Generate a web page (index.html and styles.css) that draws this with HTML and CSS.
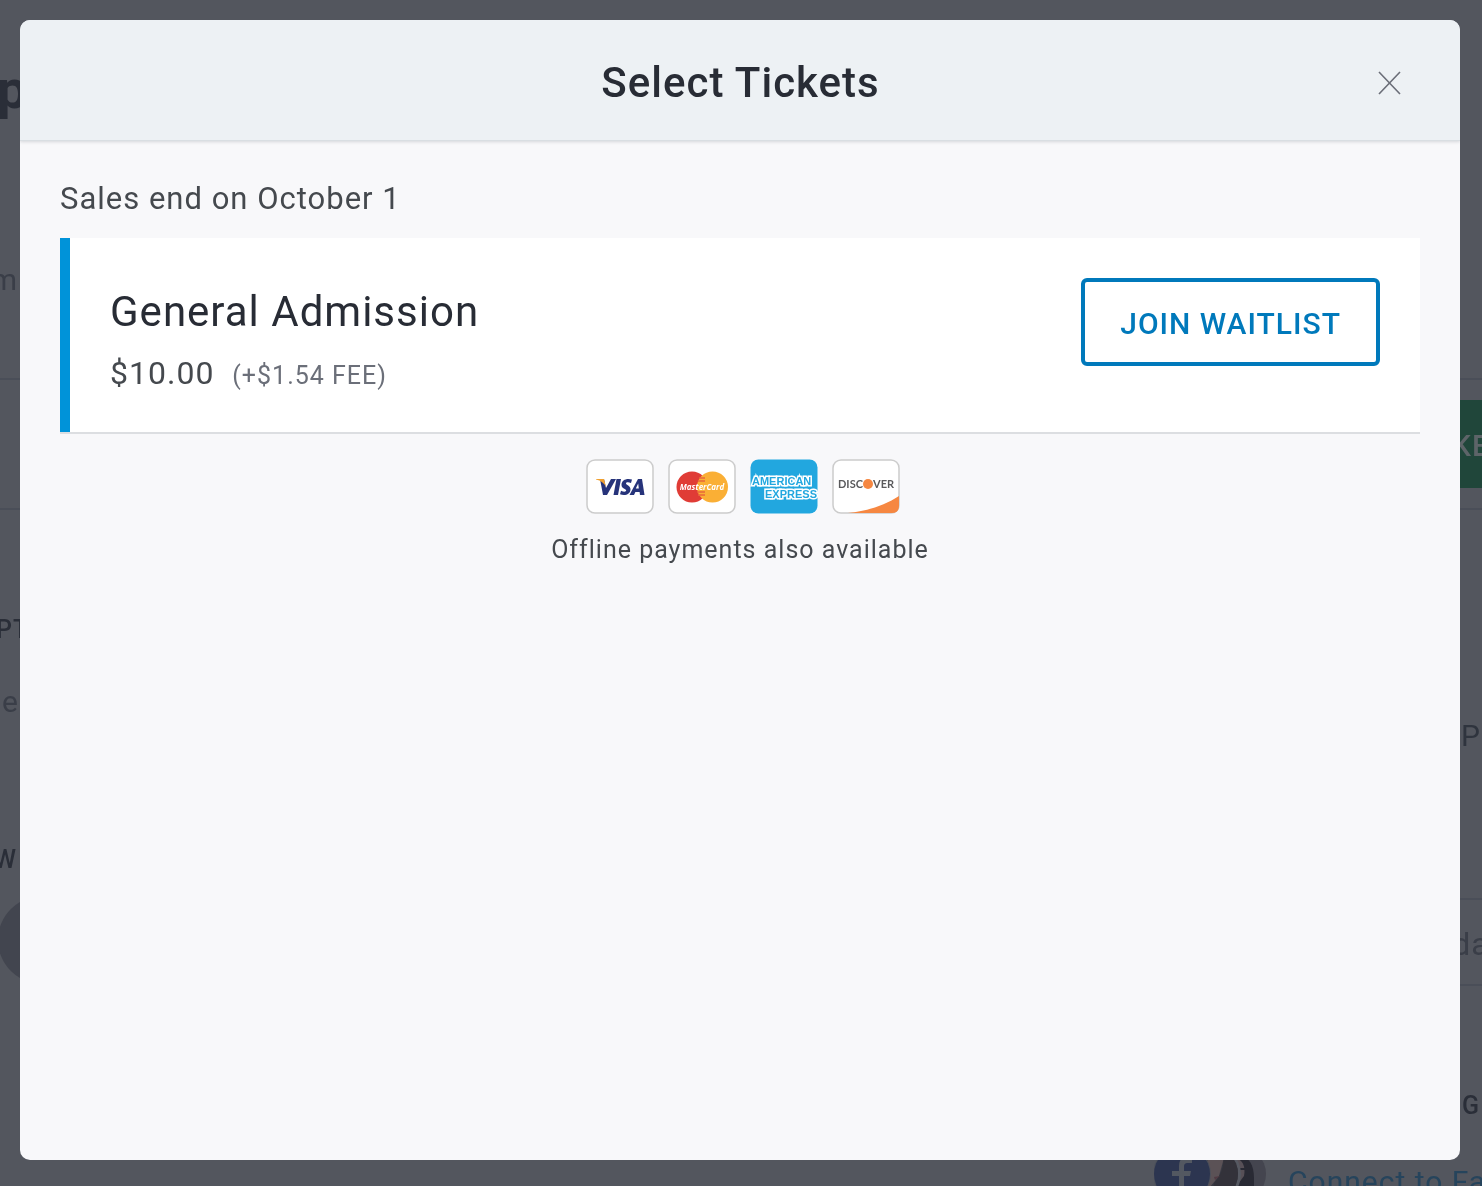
FILE: index.html
```html
<!DOCTYPE html>
<html lang="en">
<head>
<meta charset="utf-8">
<meta name="viewport" content="width=device-width, initial-scale=1">
<title>Select Tickets</title>
<link rel="stylesheet" href="styles.css">
</head>
<body>
<div class="page" aria-hidden="true">
  <div class="page-columns">
    <div class="strip">
      <div class="strip-title">p</div>
      <div class="strip-meta">m</div>
      <div class="strip-band"></div>
      <div class="strip-body">
        <div class="strip-label strip-label-start">PT</div>
        <div class="strip-text strip-copy">e</div>
        <div class="strip-label strip-tags">W</div>
        <div class="strip-avatar"></div>
      </div>
    </div>
    <div class="strip strip-right">
      <div class="strip-top"></div>
      <div class="strip-band"><div class="strip-buy">KE</div></div>
      <div class="strip-place">P</div>
      <div class="strip-date">da</div>
      <div class="strip-label strip-friends">G</div>
    </div>
  </div>
  <div class="connect">
    <svg class="faces" viewBox="0 0 114 56">
      <defs>
        <clipPath id="face-one"><circle cx="56" cy="28" r="28"/></clipPath>
        <clipPath id="face-two"><circle cx="84" cy="28" r="28"/></clipPath>
      </defs>
      <g clip-path="url(#face-two)">
        <rect x="56" width="58" height="56" fill="#44454f"/>
        <path d="M80 14c10-8 20 0 20 18v24H78z" fill="#292a34"/>
        <path d="M82 13c6 0 10 7 8 17l-6 8h-4z" fill="#575057"/>
        <path d="M84 23h8" stroke="#292a34" stroke-width="2"/>
      </g>
      <circle cx="58" cy="28" r="29" fill="#565962"/>
      <g clip-path="url(#face-one)">
        <rect x="28" width="56" height="56" fill="#383a43"/>
        <path d="M54 8l16 4-5 18-9 11-4-2z" fill="#5b5256"/>
        <path d="M69 6c2 14-2 23-9 31l-2 19h26V8z" fill="#33323a"/>
        <path d="M60 31l6-1-5 4z" fill="#503a43"/>
      </g>
      <circle cx="28" cy="28" r="29" fill="#4c505b"/>
      <circle cx="28" cy="28" r="28" fill="#2c3550"/>
      <path d="M25 44V30h-7v-5h7v-5c0-6 3-9 9-9l4 1v5h-4c-3 0-4 1-4 4v4h7l-1 5h-6v14z" fill="#535861"/>
    </svg>
    <span class="connect-text">Connect to Facebook</span>
  </div>
</div>

<main class="modal" role="dialog" aria-modal="true" aria-labelledby="modal-title">
  <header class="modal-header">
    <h1 class="modal-title" id="modal-title">Select Tickets</h1>
    <button class="close" type="button" aria-label="Close">
      <svg class="close-icon" viewBox="0 0 24 24"><path d="M2 1l21 22M23 1L2 23" stroke="#6b6e78" stroke-width="1.600" fill="none"/></svg>
    </button>
  </header>
  <div class="modal-body">
    <p class="sales-end">Sales end on October 1</p>
    <section class="ticket">
      <div class="ticket-info">
        <h2 class="ticket-name">General Admission</h2>
        <p class="ticket-price">$10.00 <span class="ticket-fee">(+$1.54 FEE)</span></p>
      </div>
      <button class="waitlist" type="button">JOIN WAITLIST</button>
    </section>
    <div class="payments">
      <div class="cards">
        <svg class="card" viewBox="0 0 68 55" role="img" aria-label="Visa">
          <rect x="1" y="1" width="66" height="53" rx="8" fill="#fff" stroke="#ccc" stroke-width="1.5"/>
          <g fill="#26337a">
            <path d="M14 20h4l2 9 5-9h5l-9 16h-4z"/>
            <path d="M30.500 20h4.500l-3 16h-4.500z"/>
            <path d="M46 20.500l-1 3.500c-3-1.200-5-.8-5 .6 0 1.600 4.500 2 4.500 5.700 0 5-5.500 7-10.500 5l1-3.600c3 1.400 5 1.200 5.200-.2.200-1.600-4.700-2-4.700-5.600 0-5 5.200-7 10.500-5.400z"/>
            <path fill-rule="evenodd" d="M52 20h4l2.500 16H54l-.4-3h-4.200L48 36h-4.500zm.8 9.500l-.6-5-2.400 5z"/>
          </g>
          <path d="M10 20h8l2 8c-2-4-5-6.500-10-7.500z" fill="#f0a030"/>
        </svg>
        <svg class="card" viewBox="0 0 68 55" role="img" aria-label="MasterCard">
          <rect x="1" y="1" width="66" height="53" rx="8" fill="#fff" stroke="#ccc" stroke-width="1.5"/>
          <circle cx="24" cy="28" r="15.500" fill="#e03c36"/>
          <circle cx="44.500" cy="28" r="15.500" fill="#faaf35"/>
          <path d="M31 19h6M30 22h7M29 33h8M30 36h7" stroke="#e8683a" stroke-width="1.500"/>
          <text class="mastercard-text" x="34" y="31" text-anchor="middle">MasterCard</text>
        </svg>
        <svg class="card" viewBox="0 0 68 55" role="img" aria-label="American Express">
          <rect x=".5" y=".5" width="67" height="54" rx="8" fill="#22a7df"/>
          <text class="amex-text" x="2" y="26">AMERICAN</text>
          <text class="amex-text" x="15" y="39">EXPRESS</text>
        </svg>
        <svg class="card" viewBox="0 0 68 55" role="img" aria-label="Discover">
          <rect x="1" y="1" width="66" height="53" rx="8" fill="#fff" stroke="#ccc" stroke-width="1.5"/>
          <path d="M16 54c20-2 37-8 51-17v10q0 7-7 7z" fill="#f68741"/>
          <text class="discover-text" x="6" y="29">DISC</text>
          <circle cx="36" cy="25" r="5" fill="#f68741"/>
          <text class="discover-text" x="41" y="29">VER</text>
        </svg>
      </div>
      <p class="offline">Offline payments also available</p>
    </div>
  </div>
</main>
</body>
</html>
```
FILE: styles.css
```css
* { box-sizing: border-box; }

html, body { height: 100%; }

body {
  margin: 0;
  background: #53565e;
  color: #45494e;
  font-family: Roboto, "Liberation Sans", sans-serif;
  letter-spacing: 1px;
}

h1, h2, p { margin: 0; font-weight: 400; }

button { font: inherit; letter-spacing: inherit; cursor: pointer; }

/* Dimmed event page behind the dialog */
.page {
  position: fixed;
  inset: 0;
  overflow: hidden;
  color: #3a3e48;
  font-size: 30px;
}

.page-columns { display: flex; justify-content: space-between; height: 1146px; }

.strip { width: 20px; overflow: hidden; }
.strip-right { width: 22px; }

.strip-title {
  height: 180px;
  line-height: 180px;
  font-size: 54px;
  font-weight: 700;
  color: #2a2e38;
  text-indent: -3px;
}

.strip-meta {
  display: flex;
  justify-content: flex-end;
  height: 200px;
  line-height: 200px;
  padding-right: 2px;
  border-bottom: 2px solid #4a4e58;
}

.strip-top { height: 380px; border-bottom: 2px solid #4a4e58; }

.strip-band { height: 130px; padding: 20px 0; border-bottom: 2px solid #4a4e58; }

.strip-buy {
  display: flex;
  justify-content: center;
  height: 88px;
  line-height: 92px;
  background: #20463a;
  color: #5d6468;
  font-size: 30px;
  font-weight: 500;
}

.strip-body { padding-top: 104px; }

.strip-label { line-height: 32px; font-size: 25px; font-weight: 500; color: #2a2e38; }
.strip-label-start { text-indent: -4px; }

.strip-text { line-height: 32px; }
.strip-copy { margin-top: 40px; padding-left: 2px; }

.strip-tags { display: flex; justify-content: flex-end; margin-top: 126px; padding-right: 3px; }

.strip-avatar {
  width: 88px;
  height: 88px;
  margin: 20px 0 0 -2px;
  border-radius: 50%;
  background: #42454f;
}

.strip-place, .strip-date, .strip-friends { display: flex; justify-content: center; }
.strip-place { height: 390px; padding-top: 208px; line-height: 36px; border-bottom: 2px solid #4a4e58; color: #2f343e; }
.strip-date { height: 86px; line-height: 88px; font-size: 32px; border-bottom: 2px solid #4a4e58; }
.strip-friends { padding-top: 104px; }

.connect { display: flex; gap: 20px; width: 328px; margin-left: auto; white-space: nowrap; color: #26445c; }
.faces { flex: none; width: 114px; height: 56px; }
.connect-text { padding-top: 18px; line-height: 36px; }

/* Dialog */
.modal {
  position: fixed;
  inset: 20px 22px 26px 20px;
  overflow: auto;
  border-radius: 10px;
  background: #f8f8fa;
}

.modal-header {
  display: grid;
  grid-template-columns: 1fr auto 1fr;
  align-items: center;
  height: 121px;
  padding: 6px 59px 0 60px;
  background: #edf1f4;
  border-bottom: 1px solid #d9dee2;
  box-shadow: 0 1px 3px rgba(40, 44, 53, .16);
}

.modal-title { grid-column: 2; line-height: 52px; font-size: 42px; font-weight: 500; color: #282c35; }

.close { display: flex; justify-self: end; padding: 0; border: 0; background: none; }
.close-icon { width: 24px; height: 24px; }

.modal-body { padding: 40px; }

.sales-end { line-height: 36px; font-size: 31px; }

.ticket {
  display: flex;
  justify-content: space-between;
  align-items: flex-start;
  margin-top: 21px;
  padding: 40px 40px 40px 50px;
  background: linear-gradient(to right, #0093d9 10px, #fff 10px) padding-box;
  border-bottom: 2px solid #dcdee1;
}

.ticket-info { padding-top: 8px; }
.ticket-name { line-height: 52px; font-size: 42px; color: #282c35; }
.ticket-price { margin-top: 16px; line-height: 38px; font-size: 32px; }
.ticket-fee { margin-left: 9px; line-height: 1; font-size: 25px; color: #6b6f79; }

.waitlist {
  height: 88px;
  padding: 2px 35px 0;
  border: 4px solid #0079bb;
  border-radius: 6px;
  background: #fff;
  color: #0079bb;
  font-size: 30px;
  font-weight: 500;
}

.payments { display: flex; flex-direction: column; align-items: center; padding-top: 25px; }
.cards { display: flex; gap: 14px; margin-left: 5px; }
.card { width: 68px; height: 55px; letter-spacing: 0; }
.mastercard-text { font: italic 700 8px "Open Sans", sans-serif; fill: #fff; }
.amex-text { font: 700 11px "Liberation Sans", sans-serif; fill: #22a7df; stroke: #fff; stroke-width: 3px; paint-order: stroke; }
.discover-text { font: 700 11px Lato, sans-serif; fill: #5a5a5c; }

.offline { margin-top: 20px; line-height: 32px; font-size: 25px; }
```
